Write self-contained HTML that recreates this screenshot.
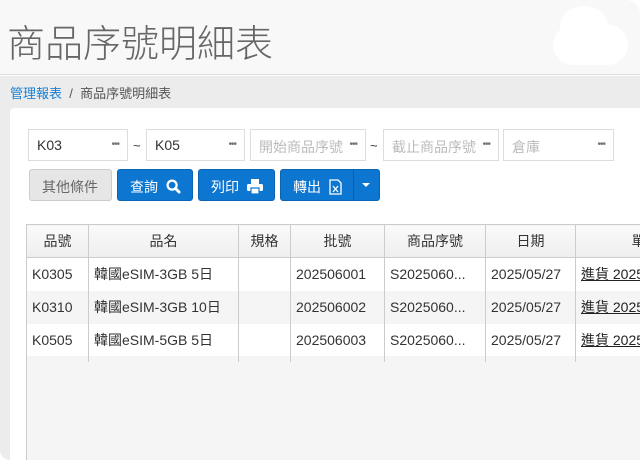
<!DOCTYPE html>
<html><head><meta charset="utf-8"><style>
*{margin:0;padding:0;box-sizing:border-box}
body{width:640px;height:462px;overflow:hidden;background:#fff;font-family:"Liberation Sans","Noto Sans CJK TC",sans-serif;position:relative}
.hdr{position:absolute;left:0;top:0;width:640px;height:75px;background:#f8f8f8;border-bottom:1px solid #ddd;border-top-right-radius:14px}
.title{position:absolute;left:7px;top:13px;font-size:38px;color:#666;font-weight:300}
.cloud{position:absolute;background:#fff;border-radius:50%}
.gray{position:absolute;left:0;top:76px;width:640px;height:384px;background:#ececec;border-bottom-left-radius:10px}
.bc{position:absolute;left:10px;top:83px;font-size:13px;color:#555}
.bc a{color:#1a7fd0}
.card{position:absolute;left:10px;top:108px;width:640px;height:360px;background:#fff;border-radius:4px}
.inp{position:absolute;top:129px;height:32px;border:1px solid #ddd;background:#fff;font-size:14px;color:#333;padding:7px 0 0 8px;overflow:hidden;white-space:nowrap}
.inp.ph{color:#bbb}
.dots{position:absolute;right:0;top:0;height:30px;line-height:30px;padding:0 8px 0 4px;background:#fff;font-size:10px;color:#777;letter-spacing:-1px}
.tl{position:absolute;top:138px;font-size:13px;color:#333}
.btn{position:absolute;top:169px;height:32px;border-radius:3px;background:#0d76d1;border:1px solid #0a64b3;color:#fff;font-size:14px;padding:7px 0 0 12px}
.btn.g{background:#e6e6e6;border-color:#ccc;color:#666}
table{position:absolute;left:26px;top:224px;border-collapse:collapse;font-size:14px;color:#333;table-layout:fixed;width:689px}
td,th{border-left:1px solid #ccc;border-right:1px solid #ccc;height:33px;padding:0 5px;white-space:nowrap;overflow:hidden;font-weight:normal}
th{text-align:center;background:linear-gradient(#fafafa,#eee);border:1px solid #ccc}
tr:nth-child(odd) td{background:#f5f5f5}
u{color:#222}
.tb{position:absolute;left:26px;top:356px;width:620px;height:104px;background:#f5f5f5;border-left:1px solid #ccc}
.vl{position:absolute;top:356px;height:6px;width:1px;background:#ccc}
</style></head><body>
<div class="hdr"></div>
<div class="cloud" style="left:560px;top:6px;width:48px;height:40px"></div>
<div class="cloud" style="left:553px;top:25px;width:75px;height:40px;border-radius:20px"></div>
<div class="title">商品序號明細表</div>
<div class="gray"></div>
<div class="bc"><a>管理報表</a>&nbsp;&nbsp;/&nbsp;&nbsp;商品序號明細表</div>
<div class="card"></div>
<div class="inp" style="left:28px;width:100px">K03<span class="dots">•••</span></div>
<div class="tl" style="left:133px">~</div>
<div class="inp" style="left:146px;width:99px">K05<span class="dots">•••</span></div>
<div class="inp ph" style="left:250px;width:116px">開始商品序號<span class="dots">•••</span></div>
<div class="tl" style="left:370px">~</div>
<div class="inp ph" style="left:383px;width:116px">截止商品序號<span class="dots">•••</span></div>
<div class="inp ph" style="left:503px;width:111px">倉庫<span class="dots">•••</span></div>
<div class="btn g" style="left:29px;width:83px">其他條件</div>
<div class="btn" style="left:117px;width:76px">查詢&nbsp;&nbsp;<svg width="15" height="15" viewBox="0 0 16 16" style="vertical-align:-2px"><circle cx="6.5" cy="6.5" r="4.8" fill="none" stroke="#fff" stroke-width="2.4"/><path d="M10 10l4 4" stroke="#fff" stroke-width="3" stroke-linecap="round"/></svg></div>
<div class="btn" style="left:198px;width:77px">列印&nbsp;&nbsp;<svg width="16" height="15" viewBox="0 0 16 15" style="vertical-align:-2px"><rect x="4" y="0" width="8" height="5" fill="#fff"/><rect x="0" y="5" width="16" height="7" rx="1.5" fill="#fff"/><rect x="4" y="9" width="8" height="6" fill="#fff" stroke="#0d76d1" stroke-width="1.2"/></svg></div>
<div class="btn" style="left:280px;width:100px">轉出&nbsp;&nbsp;<svg width="13" height="16" viewBox="0 0 13 16" style="vertical-align:-3px"><path d="M1 1h8l3 3v11H1z" fill="none" stroke="#fff" stroke-width="1.3"/><path d="M4 7l5 6M9 7l-5 6" stroke="#fff" stroke-width="1.3"/></svg></div>
<div style="position:absolute;left:353px;top:170px;width:1px;height:30px;background:#0a5ea8"></div>
<div style="position:absolute;left:362px;top:183px;border-left:4px solid transparent;border-right:4px solid transparent;border-top:4px solid #fff"></div>
<div class="tb"></div>
<div class="vl" style="left:88px"></div><div class="vl" style="left:238px"></div><div class="vl" style="left:290px"></div><div class="vl" style="left:384px"></div><div class="vl" style="left:485px"></div><div class="vl" style="left:575px"></div>
<table>
<colgroup><col style="width:62px"><col style="width:150px"><col style="width:52px"><col style="width:94px"><col style="width:101px"><col style="width:90px"><col style="width:140px"></colgroup>
<tr><th>品號</th><th>品名</th><th>規格</th><th>批號</th><th>商品序號</th><th>日期</th><th>單據</th></tr>
<tr><td>K0305</td><td>韓國eSIM-3GB 5日</td><td></td><td>202506001</td><td>S2025060...</td><td>2025/05/27</td><td><u>進貨 2025</u></td></tr>
<tr><td>K0310</td><td>韓國eSIM-3GB 10日</td><td></td><td>202506002</td><td>S2025060...</td><td>2025/05/27</td><td><u>進貨 2025</u></td></tr>
<tr><td>K0505</td><td>韓國eSIM-5GB 5日</td><td></td><td>202506003</td><td>S2025060...</td><td>2025/05/27</td><td><u>進貨 2025</u></td></tr>
</table>
</body></html>
